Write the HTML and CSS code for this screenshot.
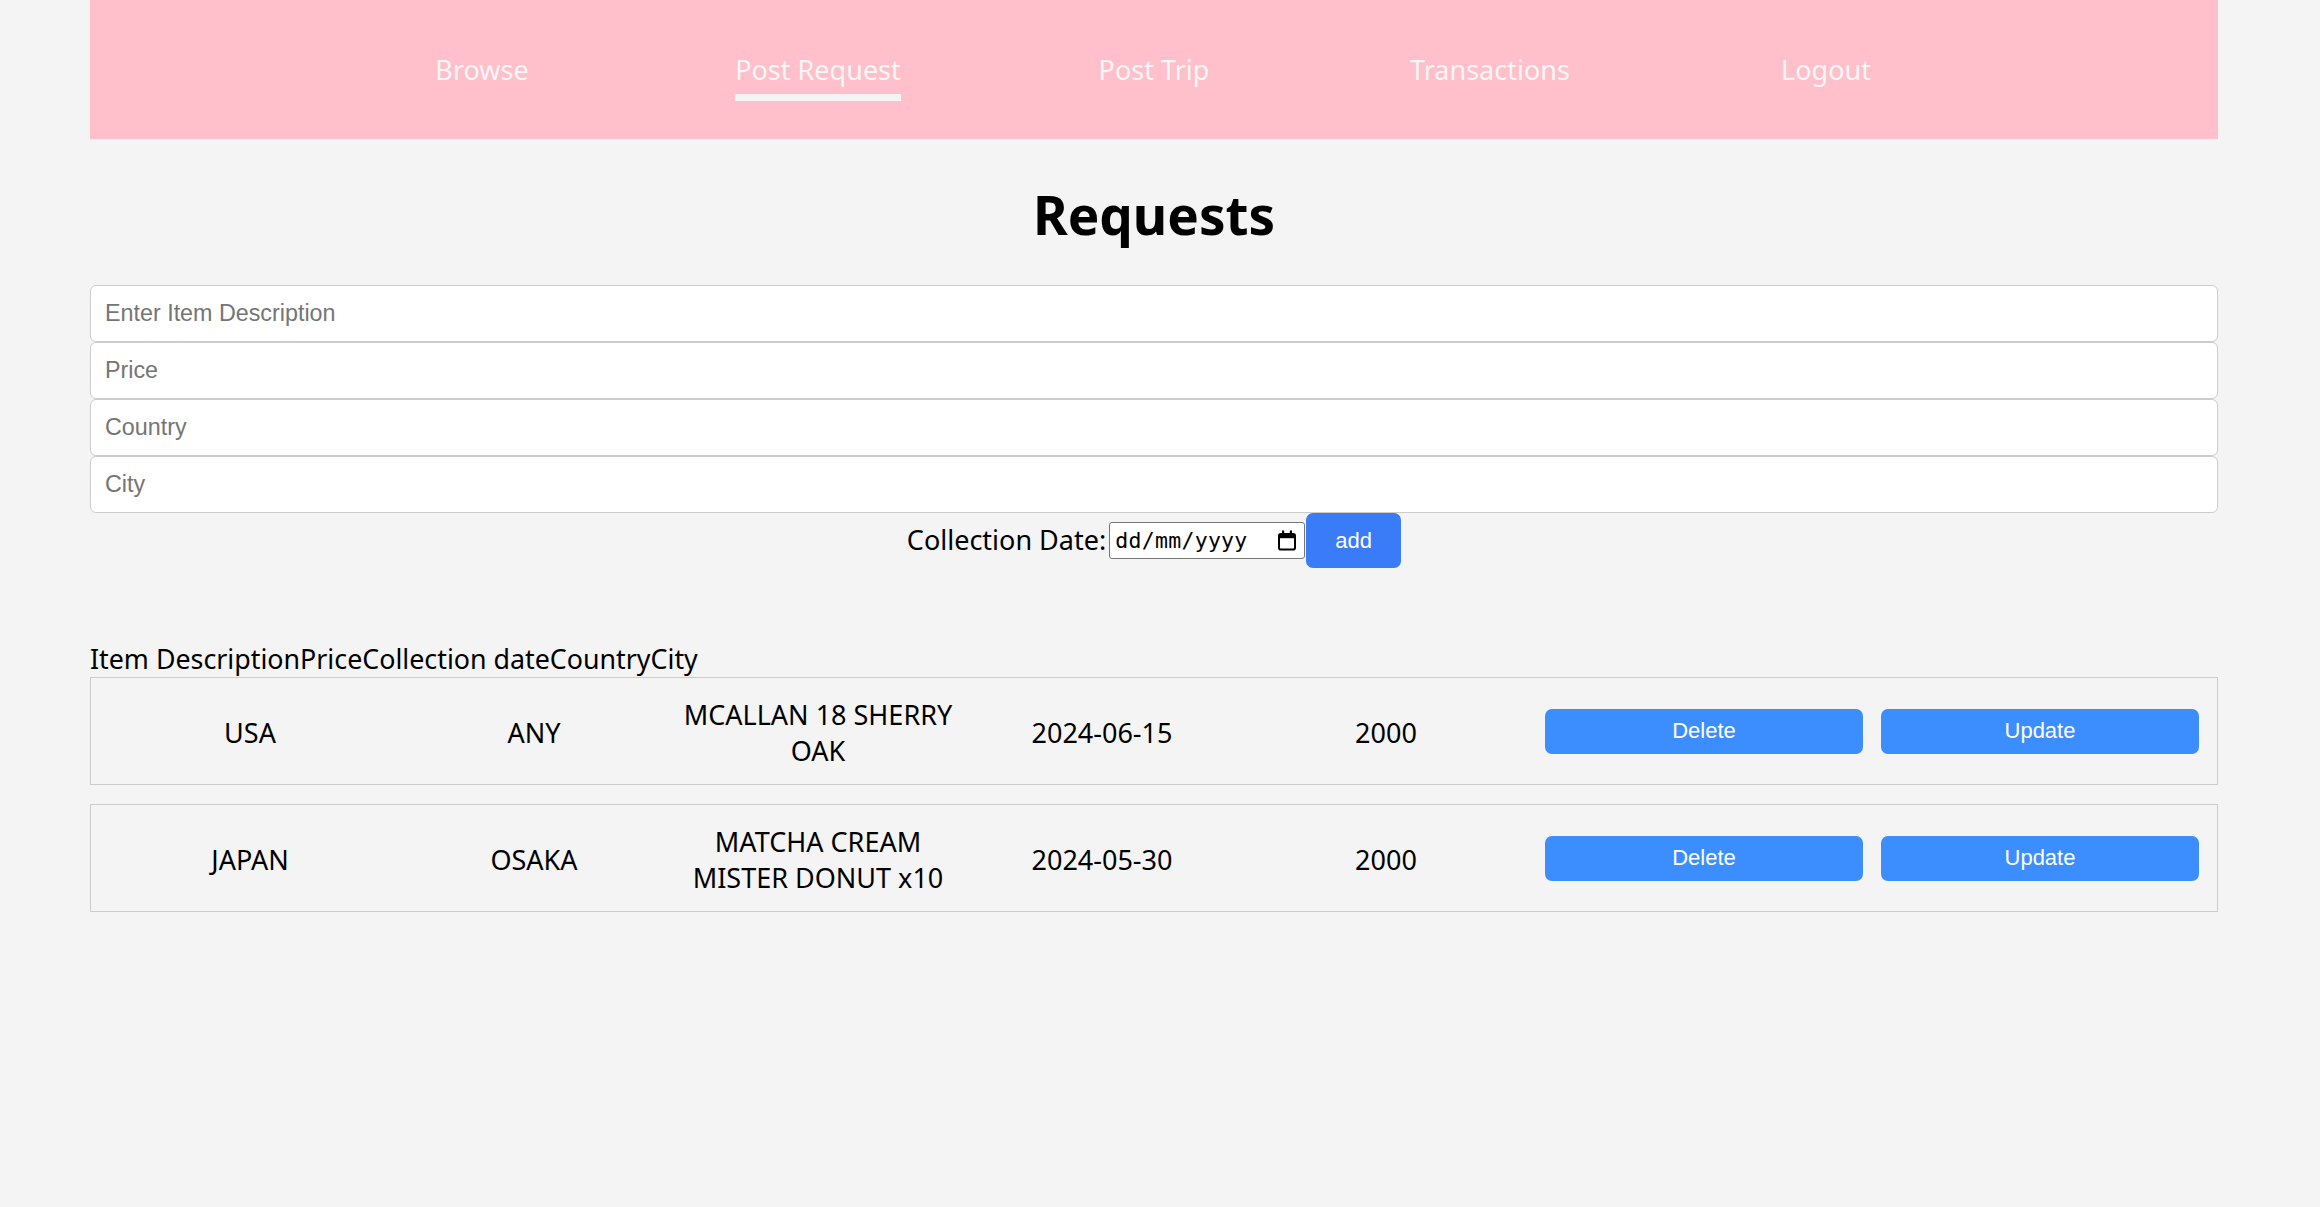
FILE: index.html
```html
<!DOCTYPE html>
<html lang="en-GB">
<head>
<meta charset="utf-8">
<title>Requests</title>
<link rel="stylesheet" href="styles.css">
</head>
<body>
<div class="page">
  <nav class="nav">
    <ul class="nav-list">
      <li class="nav-item"><a class="nav-link" href="#">Browse</a></li>
      <li class="nav-item"><a class="nav-link active" href="#">Post Request</a></li>
      <li class="nav-item"><a class="nav-link" href="#">Post Trip</a></li>
      <li class="nav-item"><a class="nav-link" href="#">Transactions</a></li>
      <li class="nav-item"><a class="nav-link" href="#">Logout</a></li>
    </ul>
  </nav>

  <h1 class="title">Requests</h1>

  <form class="form">
    <input class="field" type="text" placeholder="Enter Item Description">
    <input class="field" type="text" placeholder="Price">
    <input class="field" type="text" placeholder="Country">
    <input class="field" type="text" placeholder="City">
    <div class="date-row">
      <label class="date-label" for="cdate">Collection Date:</label><div class="date-input"><input id="cdate" class="date-text" type="text" placeholder="dd/mm/yyyy"><svg class="cal-icon" width="20" height="21" viewBox="0 0 20 21" aria-hidden="true"><rect x="5" y="0.5" width="2.2" height="4" fill="#000"/><rect x="12.8" y="0.5" width="2.2" height="4" fill="#000"/><rect x="2" y="4" width="16" height="15.5" rx="1.8" fill="none" stroke="#000" stroke-width="2"/><rect x="2" y="4" width="16" height="4.2" fill="#000"/></svg></div><button class="add-btn" type="button">add</button>
    </div>
  </form>

  <div class="table-head"><span>Item Description</span><span>Price</span><span>Collection date</span><span>Country</span><span>City</span></div>

  <div class="row">
    <div class="cell">USA</div>
    <div class="cell">ANY</div>
    <div class="cell">MCALLAN 18 SHERRY OAK</div>
    <div class="cell">2024-06-15</div>
    <div class="cell">2000</div>
    <button class="btn" type="button">Delete</button>
    <button class="btn btn-last" type="button">Update</button>
  </div>
  <div class="row">
    <div class="cell">JAPAN</div>
    <div class="cell">OSAKA</div>
    <div class="cell">MATCHA CREAM MISTER DONUT x10</div>
    <div class="cell">2024-05-30</div>
    <div class="cell">2000</div>
    <button class="btn" type="button">Delete</button>
    <button class="btn btn-last" type="button">Update</button>
  </div>
</div>
</body>
</html>
```
FILE: styles.css
```css
* { box-sizing: border-box; }

body {
  margin: 0;
  background: #f4f4f4;
  font-family: "Noto Sans", "Open Sans", sans-serif;
  color: #000;
}

.page {
  width: 2128px;
  margin-left: 90px;
}

.nav {
  height: 139px;
  background: #ffc0cb;
  padding-top: 51px;
  display: flex;
  justify-content: center;
}

.nav-list {
  list-style: none;
  margin: 0;
  padding: 0;
  width: 1680px;
  display: flex;
}

.nav-item {
  flex: 1;
  text-align: center;
}

.nav-link {
  display: inline-block;
  font-size: 27px;
  line-height: 37px;
  color: #f6f6f6;
  text-decoration: none;
}

.nav-link.active {
  padding-bottom: 6px;
  border-bottom: 7px solid #f4f4f4;
}

.title {
  margin: 40px 0 35px;
  font-size: 53px;
  line-height: 71px;
  font-weight: 700;
  text-align: center;
}

.form {
  margin: 0;
}

.field {
  display: block;
  width: 100%;
  height: 57px;
  margin: 0;
  padding: 0 14px;
  border: 1px solid #ccc;
  border-radius: 6px;
  background: #fff;
  font-family: "Liberation Sans", Arial, sans-serif;
  font-size: 23.3px;
  color: #000;
}

.field::placeholder {
  color: #757575;
}

.date-row {
  display: flex;
  justify-content: center;
  align-items: center;
  height: 55px;
}

.date-label {
  font-size: 27px;
  line-height: 37px;
  margin-bottom: 3px;
}

.date-input {
  display: flex;
  align-items: center;
  width: 196px;
  height: 37px;
  margin-left: 3px;
  padding: 0 7px 0 5px;
  border: 1px solid #767676;
  border-radius: 3px;
  background: #fff;
}

.date-text {
  flex: 1;
  min-width: 0;
  width: 100px;
  height: 100%;
  padding: 0;
  border: none;
  outline: none;
  background: transparent;
  font-family: "DejaVu Sans Mono", monospace;
  font-size: 21.5px;
  letter-spacing: 0.3px;
  color: #000;
}

.date-text::placeholder {
  color: #000;
  opacity: 1;
}

.cal-icon {
  flex: none;
  display: block;
}

.add-btn {
  width: 95px;
  height: 55px;
  margin-left: 1px;
  border: none;
  border-radius: 7px;
  background: #3a7bf7;
  color: #fff;
  font-family: "Liberation Sans", Arial, sans-serif;
  font-size: 22px;
}

.table-head {
  margin-top: 72px;
  font-size: 26.8px;
  line-height: 37px;
}

.row {
  display: flex;
  align-items: center;
  height: 108px;
  margin-bottom: 19px;
  padding: 0 17px;
  border: 1px solid #ccc;
}

.cell {
  flex: none;
  width: 284px;
  padding-top: 3px;
  text-align: center;
  font-size: 27px;
  line-height: 36px;
}

.btn {
  flex: none;
  width: 318px;
  height: 45px;
  margin-left: 17px;
  border: none;
  border-radius: 7px;
  background: #3c8dfd;
  color: #fff;
  font-family: "Liberation Sans", Arial, sans-serif;
  font-size: 22px;
}

.btn-last {
  margin-left: 18px;
}
```
